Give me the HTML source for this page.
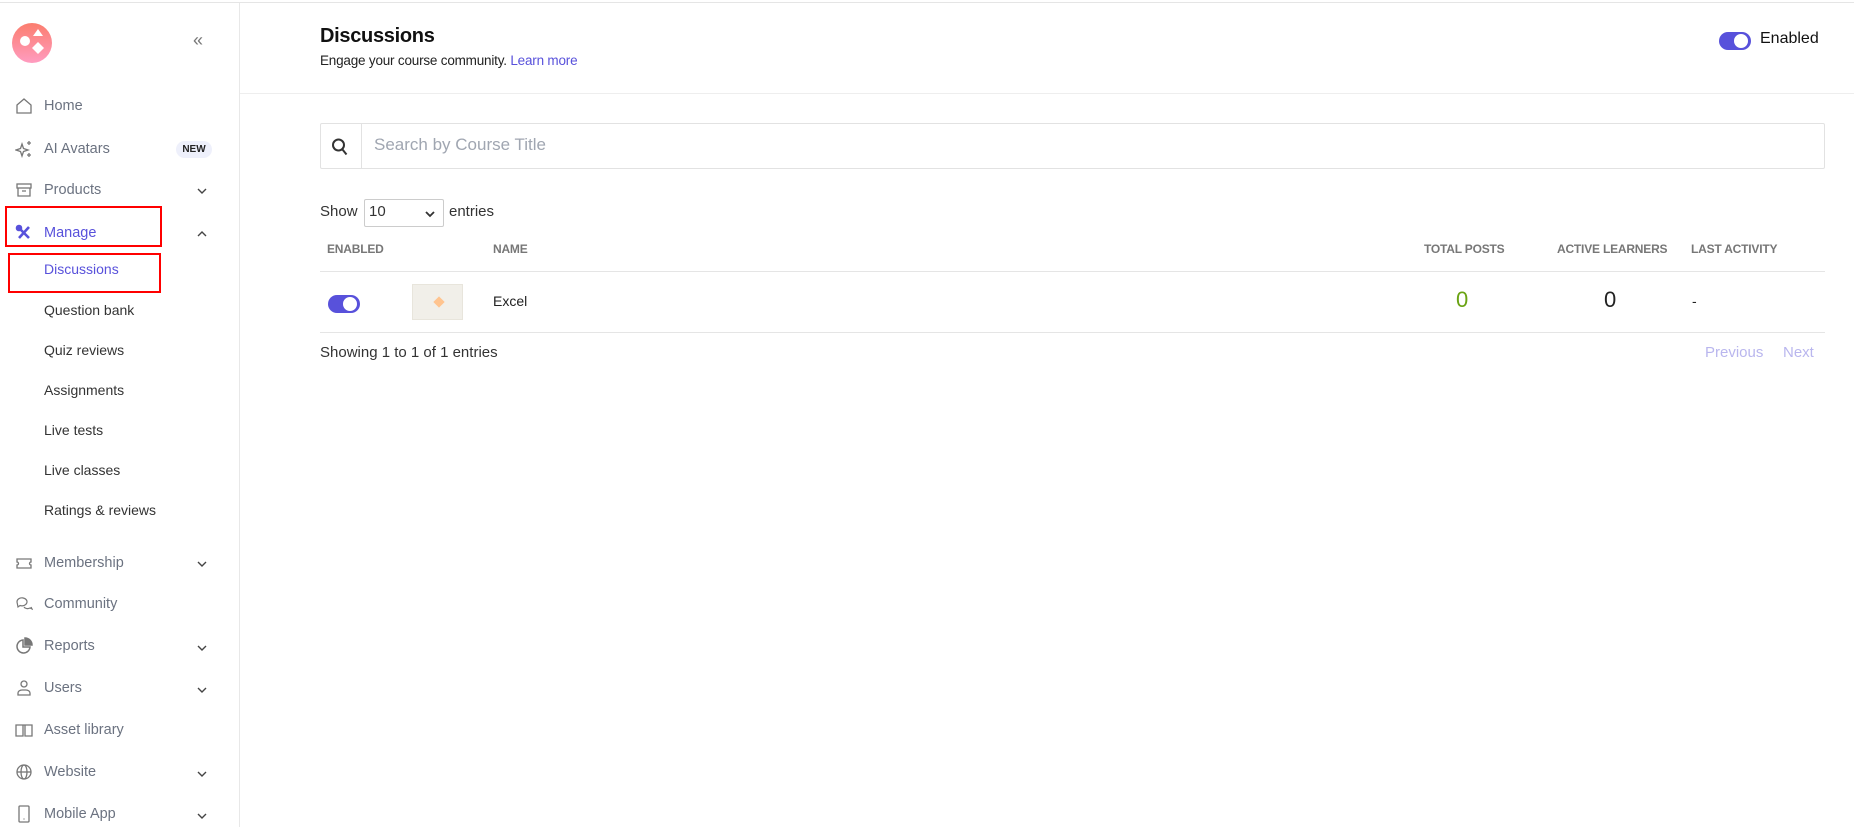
<!DOCTYPE html>
<html><head><meta charset="utf-8"><style>
*{margin:0;padding:0;box-sizing:border-box}
body{width:1854px;height:827px;overflow:hidden;background:#fff;font-family:"Liberation Sans",sans-serif;position:relative;color:#222}
.a{position:absolute}
.nav{position:absolute;left:44px;font-size:14.5px;color:#6b7280;transform:translateY(-50%);white-space:nowrap}
.sub{position:absolute;left:44px;font-size:14px;color:#333;transform:translateY(-50%);white-space:nowrap}
.ic{position:absolute;left:15px;width:18px;height:18px;transform:translateY(-50%)}
.chev{position:absolute;left:195px;width:14px;height:14px;transform:translateY(-50%)}
.th{position:absolute;top:242px;font-size:12px;color:#777;font-weight:bold;letter-spacing:-.2px}
.tg{position:absolute;background:#5851db;border-radius:10px}
</style></head><body>
<div class="a" style="left:0;top:2px;width:1854px;height:1px;background:#e5e5e5"></div>
<div class="a" style="left:239px;top:3px;width:1px;height:824px;background:#e8e8e8"></div>
<div class="a" style="left:240px;top:93px;width:1614px;height:1px;background:#eee"></div>

<svg class="a" style="left:12px;top:23px" width="40" height="40" viewBox="0 0 40 40">
<defs><linearGradient id="g" x1="0" y1="0" x2="0" y2="1"><stop offset="0" stop-color="#fb7d6e"/><stop offset="1" stop-color="#ff9cc0"/></linearGradient></defs>
<circle cx="20" cy="20" r="20" fill="url(#g)"/><circle cx="13" cy="18" r="5" fill="#fff"/>
<path d="M26 6 L31 13 L21 13Z" fill="#fff"/><path d="M26 19 L32 25 L26 31 L20 25Z" fill="#fff"/></svg>
<div class="a" style="left:193px;top:30px;font-size:18px;color:#777">«</div>

<svg class="ic" style="top:106px" viewBox="0 0 18 18" fill="none" stroke="#777" stroke-width="1.3"><path d="M2 8 L9 2 L16 8 V16 H2Z"/></svg>
<div class="nav" style="top:106px">Home</div>
<svg class="ic" style="top:149px" viewBox="0 0 18 18" fill="none" stroke="#777" stroke-width="1.3"><path d="M7 4 L8.5 8.5 L13 10 L8.5 11.5 L7 16 L5.5 11.5 L1 10 L5.5 8.5Z"/><path d="M14 1v4M12 3h4M14 13v4M12 15h4"/></svg>
<div class="nav" style="top:149px">AI Avatars</div>
<div class="a" style="left:176px;top:141px;width:36px;height:17px;border-radius:9px;background:#eef0fb;font-size:10px;font-weight:bold;color:#222;text-align:center;line-height:17px">NEW</div>
<svg class="ic" style="top:190px" viewBox="0 0 18 18" fill="none" stroke="#777" stroke-width="1.3"><rect x="2" y="3" width="14" height="4"/><path d="M3 7v8h12V7M7 10h4"/></svg>
<div class="nav" style="top:190px">Products</div>
<svg class="chev" style="top:191px" viewBox="0 0 14 14" fill="none" stroke="#444" stroke-width="1.4"><path d="M3 5l4 4 4-4"/></svg>
<svg class="ic" style="top:233px" viewBox="0 0 18 18" fill="none" stroke="#5851db" stroke-width="2.6"><path d="M4 4l10 10M14 3L4 14"/><circle cx="4" cy="4" r="2" fill="#5851db"/></svg>
<div class="nav" style="top:233px;color:#5851db">Manage</div>
<svg class="chev" style="top:234px" viewBox="0 0 14 14" fill="none" stroke="#444" stroke-width="1.4"><path d="M3 9l4-4 4 4"/></svg>
<div class="a" style="left:5px;top:206px;width:157px;height:41px;border:2px solid #f00"></div>
<div class="sub" style="top:269px;color:#5851db">Discussions</div>
<div class="a" style="left:8px;top:253px;width:153px;height:40px;border:2px solid #f00"></div>
<div class="sub" style="top:310px">Question bank</div>
<div class="sub" style="top:350px">Quiz reviews</div>
<div class="sub" style="top:390px">Assignments</div>
<div class="sub" style="top:430px">Live tests</div>
<div class="sub" style="top:470px">Live classes</div>
<div class="sub" style="top:510px">Ratings &amp; reviews</div>

<svg class="ic" style="top:563px" viewBox="0 0 18 18" fill="none" stroke="#777" stroke-width="1.3"><path d="M2 5h14v3a1.5 1.5 0 0 0 0 3v3H2v-3a1.5 1.5 0 0 0 0-3z"/></svg>
<div class="nav" style="top:563px">Membership</div>
<svg class="chev" style="top:564px" viewBox="0 0 14 14" fill="none" stroke="#444" stroke-width="1.4"><path d="M3 5l4 4 4-4"/></svg>
<svg class="ic" style="top:604px" viewBox="0 0 18 18" fill="none" stroke="#777" stroke-width="1.2"><path d="M2 7a5 4 0 1 1 3 3.5L3 12z"/><path d="M9 12a4 3 0 0 0 6 1l2 1-1-2"/></svg>
<div class="nav" style="top:604px">Community</div>
<svg class="ic" style="top:646px" viewBox="0 0 18 18" fill="none" stroke="#777" stroke-width="1.5"><path d="M8 3a6.5 6.5 0 1 0 7 7H8z"/><path d="M10 1v7h7a7 7 0 0 0-7-7z" fill="#777"/></svg>
<div class="nav" style="top:646px">Reports</div>
<svg class="chev" style="top:648px" viewBox="0 0 14 14" fill="none" stroke="#444" stroke-width="1.4"><path d="M3 5l4 4 4-4"/></svg>
<svg class="ic" style="top:688px" viewBox="0 0 18 18" fill="none" stroke="#777" stroke-width="1.3"><circle cx="9" cy="5" r="3"/><path d="M3 16v-2a4 3 0 0 1 4-3h4a4 3 0 0 1 4 3v2z"/></svg>
<div class="nav" style="top:688px">Users</div>
<svg class="chev" style="top:690px" viewBox="0 0 14 14" fill="none" stroke="#444" stroke-width="1.4"><path d="M3 5l4 4 4-4"/></svg>
<svg class="ic" style="top:730px" viewBox="0 0 18 18" fill="none" stroke="#777" stroke-width="1.3"><path d="M1 4h7v11H1zM10 4h7v11h-7zM8 4h2"/></svg>
<div class="nav" style="top:730px">Asset library</div>
<svg class="ic" style="top:772px" viewBox="0 0 18 18" fill="none" stroke="#777" stroke-width="1.3"><circle cx="9" cy="9" r="7"/><ellipse cx="9" cy="9" rx="3" ry="7"/><path d="M2 9h14"/></svg>
<div class="nav" style="top:772px">Website</div>
<svg class="chev" style="top:774px" viewBox="0 0 14 14" fill="none" stroke="#444" stroke-width="1.4"><path d="M3 5l4 4 4-4"/></svg>
<svg class="ic" style="top:814px" viewBox="0 0 18 18" fill="none" stroke="#777" stroke-width="1.3"><rect x="4" y="1" width="10" height="16" rx="1"/><path d="M8.5 14h1"/></svg>
<div class="nav" style="top:814px">Mobile App</div>
<svg class="chev" style="top:816px" viewBox="0 0 14 14" fill="none" stroke="#444" stroke-width="1.4"><path d="M3 5l4 4 4-4"/></svg>

<div class="a" style="left:320px;top:25px;font-size:20px;font-weight:bold;color:#111;letter-spacing:-.3px">Discussions</div>
<div class="a" style="left:320px;top:53px;font-size:13.5px;color:#222;letter-spacing:-.2px">Engage your course community. <span style="color:#5851db">Learn more</span></div>
<div class="tg" style="left:1719px;top:32px;width:32px;height:18px"></div>
<div class="a" style="left:1733px;top:33px;width:16px;height:16px;border-radius:50%;background:#fff;border:1px solid #5851db"></div>
<div class="a" style="left:1760px;top:30px;font-size:16px;color:#111">Enabled</div>

<div class="a" style="left:320px;top:123px;width:1505px;height:46px;border:1px solid #e2e2e2;border-radius:2px"></div>
<div class="a" style="left:361px;top:124px;width:1px;height:44px;background:#e2e2e2"></div>
<svg class="a" style="left:331px;top:137px" width="18" height="20" viewBox="0 0 18 20" fill="none" stroke="#333" stroke-width="2"><circle cx="7.5" cy="8" r="5.5"/><path d="M11.5 12.5l4 5"/></svg>
<div class="a" style="left:374px;top:135px;font-size:17px;color:#a0a6b1">Search by Course Title</div>

<div class="a" style="left:320px;top:203px;font-size:15px;color:#333">Show</div>
<div class="a" style="left:364px;top:199px;width:80px;height:28px;border:1px solid #ccc;border-radius:2px"></div>
<div class="a" style="left:369px;top:203px;font-size:15px;color:#333">10</div>
<svg class="a" style="left:423px;top:207px" width="14" height="14" viewBox="0 0 14 14" fill="none" stroke="#333" stroke-width="1.8"><path d="M3 5l4 4 4-4"/></svg>
<div class="a" style="left:449px;top:203px;font-size:15px;color:#333">entries</div>

<div class="th" style="left:327px">ENABLED</div>
<div class="th" style="left:493px">NAME</div>
<div class="th" style="left:1424px">TOTAL POSTS</div>
<div class="th" style="left:1557px">ACTIVE LEARNERS</div>
<div class="th" style="left:1691px">LAST ACTIVITY</div>
<div class="a" style="left:320px;top:271px;width:1505px;height:1px;background:#e5e5e5"></div>
<div class="tg" style="left:328px;top:295px;width:32px;height:18px"></div>
<div class="a" style="left:342px;top:296px;width:16px;height:16px;border-radius:50%;background:#fff;border:1px solid #5851db"></div>
<div class="a" style="left:412px;top:284px;width:51px;height:36px;background:#f1efe9;border:1px solid #e8e5dc"></div>
<div class="a" style="left:435px;top:298px;width:8px;height:8px;background:#ffc48f;transform:rotate(45deg)"></div>
<div class="a" style="left:493px;top:293px;font-size:14px;color:#222">Excel</div>
<div class="a" style="left:1456px;top:287px;font-size:22px;color:#6aa313">0</div>
<div class="a" style="left:1604px;top:287px;font-size:22px;color:#222">0</div>
<div class="a" style="left:1692px;top:293px;font-size:14px;color:#222">-</div>
<div class="a" style="left:320px;top:332px;width:1505px;height:1px;background:#e5e5e5"></div>
<div class="a" style="left:320px;top:344px;font-size:15px;color:#333">Showing 1 to 1 of 1 entries</div>
<div class="a" style="left:1705px;top:344px;font-size:15px;color:#b9b6ee">Previous</div>
<div class="a" style="left:1783px;top:344px;font-size:15px;color:#b9b6ee">Next</div>
</body></html>
